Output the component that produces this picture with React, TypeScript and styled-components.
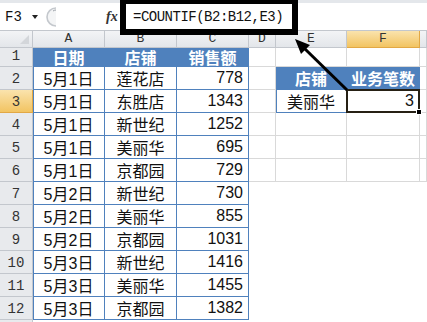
import React from 'react'
import styled, { createGlobalStyle, css } from 'styled-components'

const COLORS = {
  white: '#ffffff',
  grid: '#d9d9d9',
  blue: '#4f81bd',
  headBg: 'linear-gradient(#f3f4f6, #e3e6ea)',
  headLine: '#c3c7cd',
  headText: '#333333',
  pick: 'linear-gradient(#fae3ad, #f2c462)',
  pickLine: '#e2a845',
  text: '#111111',
}

const GlobalStyle = createGlobalStyle`
  html, body {
    margin: 0;
    padding: 0;
    background: ${COLORS.white};
  }
  * {
    box-sizing: border-box;
  }
`

const Screen = styled.div`
  position: relative;
  width: 427px;
  height: 322px;
  overflow: hidden;
  background: ${COLORS.white};
  font-family: 'Liberation Sans', 'Noto Sans CJK SC', sans-serif;
`

const FormulaBar = styled.div`
  height: 31px;
  display: flex;
  align-items: center;
  border-top: 3px solid #e4e7eb;
  border-bottom: 1px solid ${COLORS.headLine};
  background: ${COLORS.white};
`

const NameBox = styled.div`
  width: 46px;
  display: flex;
  align-items: center;
  gap: 10px;
  padding-left: 5px;
  font-family: 'Liberation Mono', monospace;
  font-size: 14px;
  color: ${COLORS.text};
`

const Caret = styled.span`
  width: 0;
  height: 0;
  border-left: 3px solid transparent;
  border-right: 3px solid transparent;
  border-top: 4px solid #222;
`

const Grip = styled.svg`
  flex-shrink: 0;
  width: 12px;
  height: 20px;
`

const FxLabel = styled.div`
  width: 62px;
  padding-left: 48px;
  font-family: 'Liberation Serif', serif;
  font-style: italic;
  font-weight: bold;
  font-size: 14px;
  color: #333;
`

const FormulaInput = styled.div`
  flex: 1;
  padding-left: 13px;
  font-family: 'Liberation Mono', monospace;
  font-size: 14px;
  letter-spacing: -0.5px;
  color: ${COLORS.text};
`

const Sheet = styled.div`
  display: grid;
  grid-template-columns: 33px 72px 72px 72px 27px 71px 73px 1fr;
  grid-template-rows: 17px 19px repeat(11, 23px) 10px;
`

const Corner = styled.div`
  position: relative;
  background: ${COLORS.headBg};
  border-right: 1px solid ${COLORS.headLine};
  border-bottom: 1px solid ${COLORS.headLine};
  &::after {
    content: '';
    position: absolute;
    right: 3px;
    bottom: 3px;
    border-left: 9px solid transparent;
    border-bottom: 9px solid #d3d6da;
  }
`

const ColHead = styled.div<{ $active?: boolean }>`
  display: flex;
  align-items: flex-end;
  justify-content: center;
  padding-bottom: 1px;
  font-family: 'Liberation Mono', monospace;
  font-size: 13px;
  color: ${COLORS.headText};
  background: ${(p) => (p.$active ? COLORS.pick : COLORS.headBg)};
  border-right: 1px solid ${(p) => (p.$active ? COLORS.pickLine : COLORS.headLine)};
  border-bottom: 1px solid ${(p) => (p.$active ? COLORS.pickLine : COLORS.headLine)};
`

const RowHead = styled.div<{ $active?: boolean }>`
  display: flex;
  align-items: flex-end;
  justify-content: center;
  padding-bottom: 2px;
  font-family: 'Liberation Mono', monospace;
  font-size: 14px;
  color: ${COLORS.headText};
  background: ${(p) => (p.$active ? COLORS.pick : '#e8eaed')};
  border-right: 1px solid ${(p) => (p.$active ? COLORS.pickLine : COLORS.headLine)};
  border-bottom: 1px solid ${(p) => (p.$active ? COLORS.pickLine : COLORS.headLine)};
`

type CellKind = 'plain' | 'head' | 'body'

const Cell = styled.div<{ $kind: CellKind; $num?: boolean; $edge?: boolean }>`
  display: flex;
  align-items: center;
  justify-content: ${(p) => (p.$num ? 'flex-end' : 'center')};
  padding-right: ${(p) => (p.$num ? '5px' : '0')};
  font-size: 16px;
  color: ${COLORS.text};
  white-space: nowrap;
  border-right: 1px solid ${COLORS.grid};
  border-bottom: 1px solid ${COLORS.grid};
  ${(p) =>
    p.$kind === 'head' &&
    css`
      background: ${COLORS.blue};
      color: ${COLORS.white};
      font-family: 'Noto Sans CJK SC', sans-serif;
      font-weight: bold;
      border-color: ${COLORS.blue};
    `}
  ${(p) =>
    p.$kind === 'body' &&
    css`
      border-color: ${COLORS.blue};
    `}
  ${(p) =>
    p.$edge &&
    css`
      box-shadow: inset 1px 0 0 ${COLORS.blue};
    `}
`

const Selected = styled(Cell)`
  position: relative;
  border: 2px solid #262014;
  margin: -1px 0 0 -1px;
  padding-right: 4px;
`

const FillHandle = styled.span`
  position: absolute;
  right: -4px;
  bottom: -4px;
  width: 6px;
  height: 6px;
  background: #000;
  border: 1px solid ${COLORS.white};
`

const Blank = styled.div`
  grid-column: span 4;
  background: ${COLORS.white};
`

const Callout = styled.div`
  position: absolute;
  left: 120px;
  top: -2px;
  width: 178px;
  height: 37px;
  border: 6px solid #000;
  pointer-events: none;
`

const Arrow = styled.svg`
  position: absolute;
  left: 0;
  top: 0;
  width: 427px;
  height: 322px;
  pointer-events: none;
`

const sales: [string, string, number][] = [
  ['5月1日', '莲花店', 778],
  ['5月1日', '东胜店', 1343],
  ['5月1日', '新世纪', 1252],
  ['5月1日', '美丽华', 695],
  ['5月1日', '京都园', 729],
  ['5月2日', '新世纪', 730],
  ['5月2日', '美丽华', 855],
  ['5月2日', '京都园', 1031],
  ['5月3日', '新世纪', 1416],
  ['5月3日', '美丽华', 1455],
  ['5月3日', '京都园', 1382],
]

const columns = ['A', 'B', 'C', 'D', 'E', 'F', '']

const sideCells = (row: number) => {
  if (row >= 7) return <Blank key="blank" />
  if (row === 2)
    return (
      <React.Fragment>
        <Cell $kind="plain" />
        <Cell $kind="head">店铺</Cell>
        <Cell $kind="head">业务笔数</Cell>
        <Cell $kind="plain" />
      </React.Fragment>
    )
  if (row === 3)
    return (
      <React.Fragment>
        <Cell $kind="plain" />
        <Cell $kind="body" $edge>
          美丽华
        </Cell>
        <Selected $kind="plain" $num>
          3
          <FillHandle />
        </Selected>
        <Cell $kind="plain" />
      </React.Fragment>
    )
  return (
    <React.Fragment>
      <Cell $kind="plain" />
      <Cell $kind="plain" />
      <Cell $kind="plain" />
      <Cell $kind="plain" />
    </React.Fragment>
  )
}

const App = () => {
  return (
    <React.Fragment>
      <GlobalStyle />
      <Screen>
        <FormulaBar>
          <NameBox>
            F3
            <Caret />
          </NameBox>
          {/* resize knob between name box and formula */}
          <Grip viewBox="0 0 12 20">
            <path d="M10 1 A9 9 0 0 0 10 19" fill="#f4f5f6" stroke="#c4c8cd" strokeWidth="1.6" />
            <path d="M7 4 A6 6 0 0 1 10 3" fill="none" stroke="#9aa0a7" strokeWidth="1" />
          </Grip>
          <FxLabel>fx</FxLabel>
          <FormulaInput>=COUNTIF(B2:B12,E3)</FormulaInput>
        </FormulaBar>
        <Sheet>
          <Corner />
          {columns.map((c, i) => (
            <ColHead key={i} $active={c === 'F'}>
              {c}
            </ColHead>
          ))}

          <RowHead>1</RowHead>
          <Cell $kind="head">日期</Cell>
          <Cell $kind="head">店铺</Cell>
          <Cell $kind="head">销售额</Cell>
          {sideCells(1)}

          {sales.map(([date, shop, amount], i) => {
            const row = i + 2
            return (
              <React.Fragment key={row}>
                <RowHead $active={row === 3}>{row}</RowHead>
                <Cell $kind="body" $edge>
                  {date}
                </Cell>
                <Cell $kind="body">{shop}</Cell>
                <Cell $kind="body" $num>
                  {amount}
                </Cell>
                {sideCells(row)}
              </React.Fragment>
            )
          })}

          <RowHead />
        </Sheet>
        <Callout />
        <Arrow viewBox="0 0 427 322">
          <line x1="347" y1="90" x2="304" y2="48" stroke="#000" strokeWidth="3" />
          <polygon points="295,39 310,45 301,54" fill="#000" />
        </Arrow>
      </Screen>
    </React.Fragment>
  )
}

export default App
